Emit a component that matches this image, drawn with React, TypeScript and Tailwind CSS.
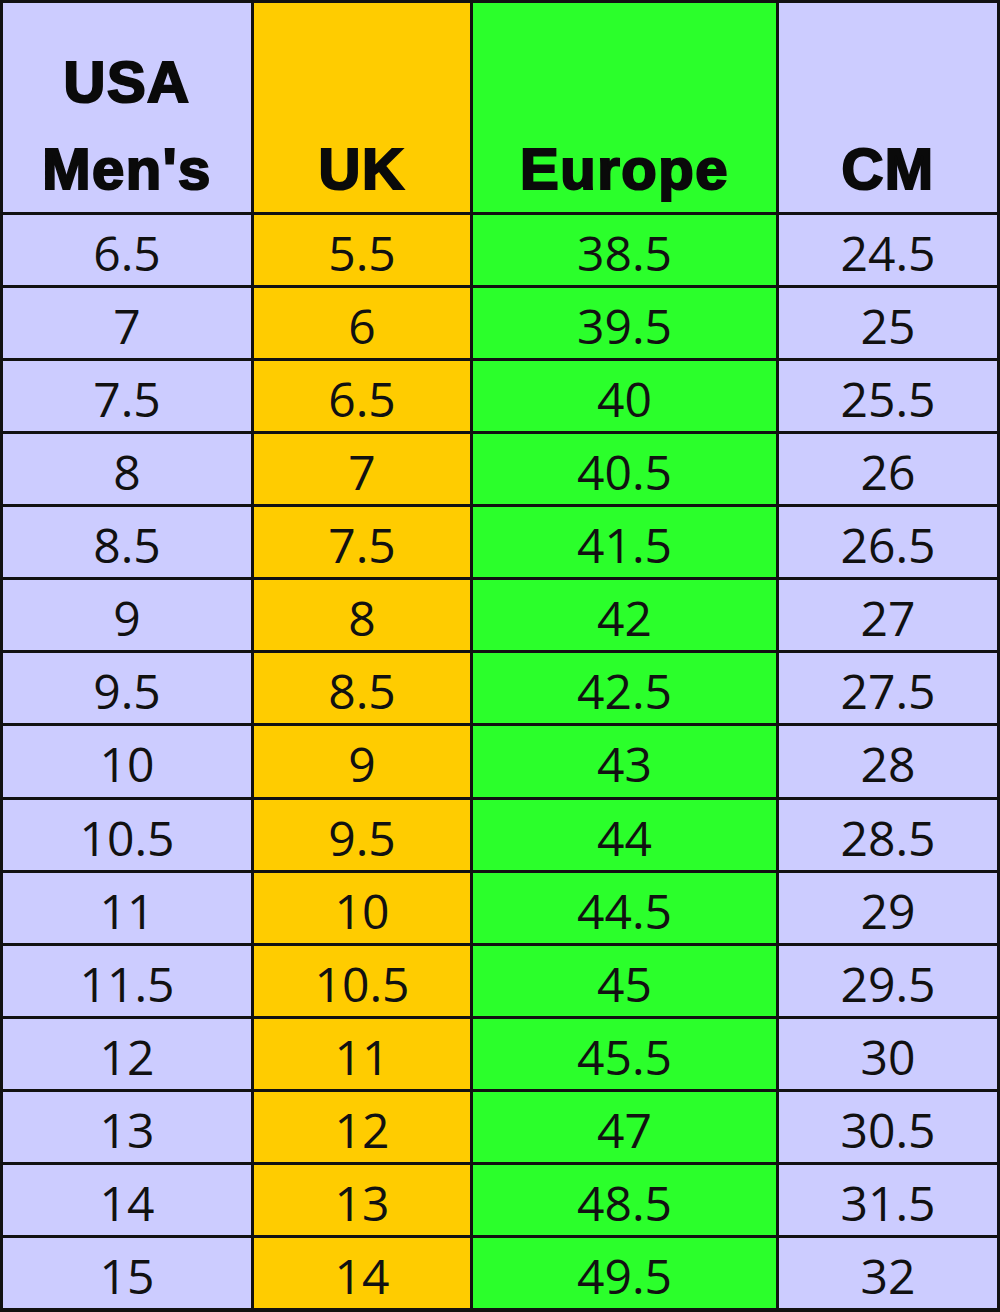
const ROWS: [string, string, string, string][] = [
  ['6.5', '5.5', '38.5', '24.5'],
  ['7', '6', '39.5', '25'],
  ['7.5', '6.5', '40', '25.5'],
  ['8', '7', '40.5', '26'],
  ['8.5', '7.5', '41.5', '26.5'],
  ['9', '8', '42', '27'],
  ['9.5', '8.5', '42.5', '27.5'],
  ['10', '9', '43', '28'],
  ['10.5', '9.5', '44', '28.5'],
  ['11', '10', '44.5', '29'],
  ['11.5', '10.5', '45', '29.5'],
  ['12', '11', '45.5', '30'],
  ['13', '12', '47', '30.5'],
  ['14', '13', '48.5', '31.5'],
  ['15', '14', '49.5', '32'],
];

const COL_BG = ['bg-[#ccccff]', 'bg-[#ffcc00]', 'bg-[#2bff2b]', 'bg-[#ccccff]'];

const headCls =
  "flex flex-col items-center justify-end text-[58px] leading-[87px] font-bold tracking-[1.5px] text-[#0a0a0a] [-webkit-text-stroke:2.2px_#0a0a0a] font-['Liberation_Sans',Arial,sans-serif]";

export default function App() {
  return (
    <div className="w-[1000px] h-[1312px] bg-[#111] pt-[3px] pl-[3px] pr-[3px] pb-[4px] grid grid-cols-[248px_216px_303px_218px] grid-rows-[209px_repeat(15,1fr)] gap-[3px]">
      {/* header */}
      <div className={`${COL_BG[0]} ${headCls}`}>
        <span>USA</span>
        <span>Men's</span>
      </div>
      <div className={`${COL_BG[1]} ${headCls}`}>
        <span>UK</span>
      </div>
      <div className={`${COL_BG[2]} ${headCls}`}>
        <span>Europe</span>
      </div>
      <div className={`${COL_BG[3]} ${headCls}`}>
        <span>CM</span>
      </div>

      {/* sizes */}
      {ROWS.map((row) =>
        row.map((val, i) => (
          <div
            key={`${row[0]}-${i}`}
            className={`${COL_BG[i]} flex items-center justify-center pt-[6px] text-[48px] leading-none text-[#111] font-['Open_Sans',sans-serif]`}
          >
            {val}
          </div>
        ))
      )}
    </div>
  );
}
